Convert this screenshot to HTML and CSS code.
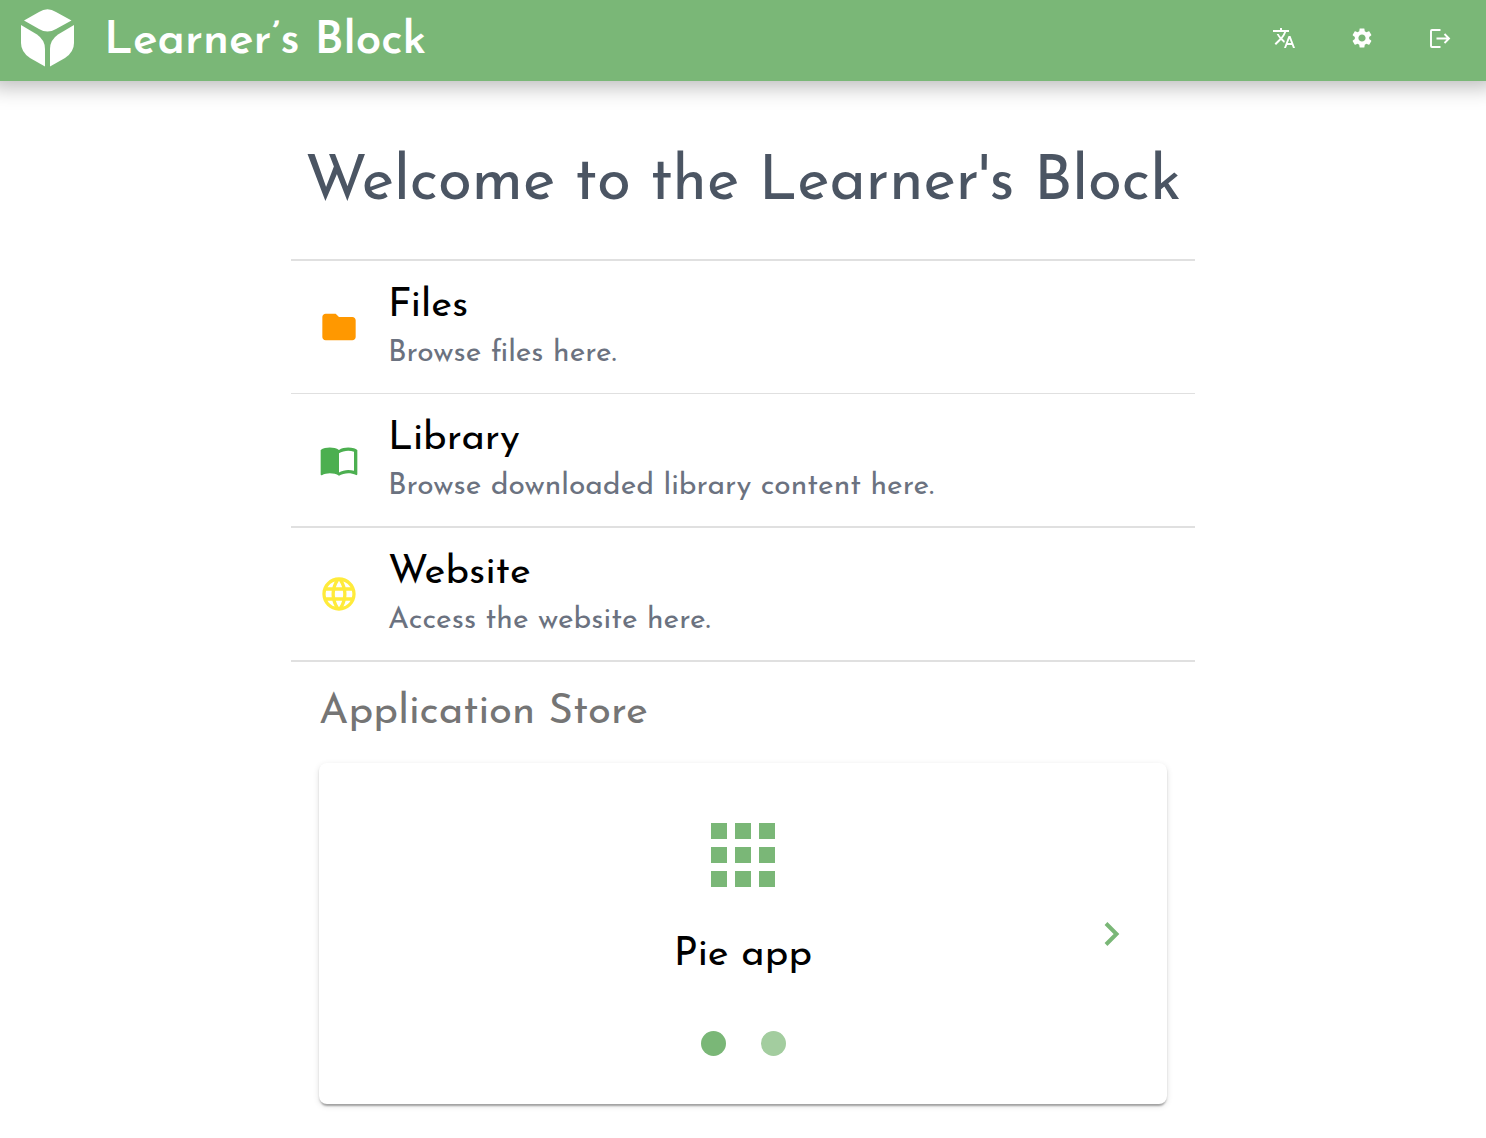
FILE: index.html
```html
<!DOCTYPE html>
<html lang="en">
<head>
<meta charset="utf-8">
<meta name="viewport" content="width=device-width, initial-scale=1">
<title>Learner's Block</title>
<link rel="stylesheet" href="styles.css">
</head>
<body>
<header class="topbar">
  <a class="brand" href="#">
    <svg class="brand-mark" viewBox="0 0 53 58" aria-hidden="true">
      <path d="M3 11.500 18 3Q26.500-2.500 35 3L50.500 11.500 35 20Q26.500 25 18 20Z"/>
      <path d="M0 16 16 25.500Q24 31 24 40V57.500L9 49Q0 43 0 34Z"/>
      <path d="M53 16 37 25.500Q29 31 29 40V57.500L44 49Q53 43 53 34Z"/>
    </svg>
    <span class="brand-name">Learner’s Block</span>
  </a>
  <nav class="tools" aria-label="Tools">
    <button class="tool" type="button" aria-label="Language">
      <svg viewBox="0 0 24 24"><path d="m12.870 15.070-2.540-2.510.030-.030c1.740-1.940 2.980-4.170 3.710-6.530H17V4h-7V2H8v2H1v1.990h11.170C11.500 7.920 10.440 9.750 9 11.350 8.070 10.320 7.300 9.190 6.690 8h-2c.730 1.630 1.730 3.170 2.980 4.560l-5.090 5.020L4 19l5-5 3.110 3.110.760-2.040zM18.500 10h-2L12 22h2l1.120-3h4.750L21 22h2l-4.500-12zm-2.620 7 1.620-4.330L19.120 17h-3.240z"/></svg>
    </button>
    <button class="tool" type="button" aria-label="Settings">
      <svg viewBox="0 0 24 24"><path d="M19.140 12.940c.040-.300.060-.610.060-.940 0-.320-.020-.640-.070-.940l2.030-1.580c.180-.140.230-.410.120-.610l-1.920-3.320c-.120-.220-.370-.290-.590-.220l-2.390.960c-.500-.380-1.030-.700-1.620-.940l-.360-2.540c-.040-.240-.240-.410-.480-.410h-3.840c-.240 0-.430.170-.470.410l-.360 2.540c-.590.240-1.130.570-1.620.940l-2.390-.960c-.220-.080-.470 0-.590.220L2.740 8.870c-.120.210-.080.470.120.610l2.030 1.580c-.050.300-.090.630-.090.940s.020.640.070.940l-2.030 1.580c-.180.140-.230.410-.120.610l1.920 3.320c.120.220.370.290.590.220l2.390-.960c.500.380 1.030.700 1.620.940l.360 2.540c.050.240.240.410.480.410h3.840c.240 0 .440-.170.470-.410l.360-2.540c.590-.240 1.130-.560 1.620-.940l2.390.960c.220.080.470 0 .590-.220l1.920-3.320c.120-.220.070-.470-.120-.610l-2.010-1.580zM12 15.600c-1.980 0-3.600-1.620-3.600-3.600s1.620-3.600 3.600-3.600 3.600 1.620 3.600 3.600-1.620 3.600-3.600 3.600z"/></svg>
    </button>
    <button class="tool" type="button" aria-label="Log out">
      <svg viewBox="0 0 24 24"><path d="M12.500 4H4a1 1 0 0 0-1 1v15a1 1 0 0 0 1 1h8.500M8.500 12.500h12.500M16.500 8l4.500 4.500-4.500 4.500" fill="none" stroke="currentColor" stroke-width="1.900"/></svg>
    </button>
  </nav>
</header>

<main class="page">
  <h1 class="welcome">Welcome to the Learner's Block</h1>
  <ul class="links">
    <li class="links-item">
      <a class="link" href="#files">
        <svg class="link-icon link-icon-files" viewBox="0 0 24 24" aria-hidden="true"><path d="M10 4H4c-1.100 0-1.990.900-1.990 2L2 18c0 1.100.900 2 2 2h16c1.100 0 2-.900 2-2V8c0-1.100-.900-2-2-2h-8l-2-2z"/></svg>
        <span class="link-text"><span class="link-title">Files</span><span class="link-note">Browse files here.</span></span>
      </a>
    </li>
    <li class="links-item">
      <a class="link" href="#library">
        <svg class="link-icon link-icon-library" viewBox="0 0 24 24" aria-hidden="true"><path d="M21 5c-1.110-.350-2.330-.500-3.500-.500-1.950 0-4.050.400-5.500 1.500-1.450-1.100-3.550-1.500-5.500-1.500S2.450 4.900 1 6v14.650c0 .250.250.500.500.500.100 0 .150-.050.250-.050C3.100 20.450 5.050 20 6.500 20c1.950 0 4.050.400 5.500 1.500 1.350-.850 3.800-1.500 5.500-1.500 1.650 0 3.350.300 4.750 1.050.100.050.150.050.250.050.250 0 .500-.250.500-.500V6c-.600-.450-1.250-.750-2-1zm0 13.500c-1.100-.350-2.300-.500-3.500-.500-1.700 0-4.150.650-5.500 1.500V8c1.350-.850 3.800-1.500 5.500-1.500 1.200 0 2.400.150 3.500.500v11.500z"/></svg>
        <span class="link-text"><span class="link-title">Library</span><span class="link-note">Browse downloaded library content here.</span></span>
      </a>
    </li>
    <li class="links-item">
      <a class="link" href="#website">
        <svg class="link-icon link-icon-website" viewBox="0 0 24 24" aria-hidden="true"><path d="M11.990 2C6.470 2 2 6.480 2 12s4.470 10 9.990 10C17.520 22 22 17.520 22 12S17.520 2 11.990 2zm6.930 6h-2.950c-.320-1.250-.780-2.450-1.380-3.560 1.840.630 3.370 1.910 4.330 3.560zM12 4.040c.830 1.200 1.480 2.530 1.910 3.960h-3.820c.430-1.430 1.080-2.760 1.910-3.960zM4.260 14C4.100 13.360 4 12.690 4 12s.100-1.360.260-2h3.380c-.080.660-.140 1.320-.140 2s.060 1.340.140 2H4.260zm.820 2h2.950c.320 1.250.780 2.450 1.380 3.560-1.840-.630-3.370-1.900-4.330-3.560zm2.950-8H5.080c.960-1.660 2.490-2.930 4.330-3.560C8.810 5.550 8.350 6.750 8.030 8zM12 19.960c-.830-1.200-1.480-2.530-1.910-3.960h3.820c-.430 1.430-1.080 2.760-1.910 3.960zM14.340 14H9.660c-.090-.660-.160-1.320-.160-2s.070-1.350.160-2h4.680c.090.650.160 1.320.160 2s-.070 1.340-.160 2zm.250 5.560c.600-1.110 1.060-2.310 1.380-3.560h2.950c-.960 1.650-2.490 2.930-4.330 3.560zM16.360 14c.080-.660.140-1.320.140-2s-.060-1.340-.140-2h3.380c.160.640.260 1.310.260 2s-.100 1.360-.260 2h-3.380z"/></svg>
        <span class="link-text"><span class="link-title">Website</span><span class="link-note">Access the website here.</span></span>
      </a>
    </li>
  </ul>

  <section class="store" aria-labelledby="store-title">
    <h2 class="store-title" id="store-title">Application Store</h2>
    <div class="card">
      <div class="slide">
        <svg class="slide-icon" viewBox="0 0 64 64" aria-hidden="true"><path d="M0 0h16v16H0zM24 0h16v16H24zM48 0h16v16H48zM0 24h16v16H0zM24 24h16v16H24zM48 24h16v16H48zM0 48h16v16H0zM24 48h16v16H24zM48 48h16v16H48z"/></svg>
        <span class="slide-name">Pie app</span>
      </div>
      <div class="dots">
        <button class="dot dot-active" type="button" aria-label="Slide 1"></button>
        <button class="dot" type="button" aria-label="Slide 2"></button>
      </div>
      <button class="next" type="button" aria-label="Next app">
        <svg viewBox="0 0 40 40"><path d="m15 9.500 10.500 10.500L15 30.500" fill="none" stroke="currentColor" stroke-width="4"/></svg>
      </button>
    </div>
  </section>
</main>
</body>
</html>
```

FILE: styles.css
```css
* {
  box-sizing: border-box;
}

body {
  margin: 0;
  background: #fff;
  color: #000;
  font-family: "Josefin Sans", Lato, sans-serif;
}

svg {
  display: block;
  fill: currentColor;
}

button {
  padding: 0;
  border: 0;
  background: none;
  color: inherit;
  cursor: pointer;
}

a {
  color: inherit;
  text-decoration: none;
}

.topbar {
  display: flex;
  align-items: center;
  justify-content: space-between;
  padding: 8px 34px 13px 21px;
  background: #7ab777;
  color: #fff;
  box-shadow: 0 -4px 20px 10px rgba(0, 0, 0, 0.27);
}

.brand {
  display: flex;
  align-items: center;
  gap: 30px;
}

.brand-mark {
  width: 53px;
  height: 58px;
}

.brand-name {
  padding-top: 8px;
  font-size: 46px;
  font-weight: 600;
  line-height: 52px;
}

.tools {
  display: flex;
  gap: 54px;
}

.tool {
  width: 24px;
  height: 24px;
}

.page {
  max-width: 904px;
  margin: 0 auto;
  padding-bottom: 32px;
}

.welcome {
  margin: 0;
  padding: 63px 0 35px;
  color: #4b5563;
  font-size: 62px;
  font-weight: 400;
  line-height: 80px;
  text-align: center;
}

.links {
  margin: 0;
  padding: 0;
  border-top: 2px solid #e0e0e0;
  list-style: none;
}

.links-item {
  border-bottom: 2px solid #e0e0e0;
}

.links-item:first-child {
  border-bottom-width: 1px;
}

.link {
  display: flex;
  align-items: center;
  gap: 29px;
  padding: 0 28px;
}

.link-icon {
  flex: none;
  width: 40px;
  height: 40px;
}

.link-icon-files {
  color: #ff9800;
}

.link-icon-library {
  color: #4caf50;
}

.link-icon-website {
  color: #ffeb3b;
}

.link-text {
  display: flex;
  flex-direction: column;
  padding: 21px 0 15px;
}

.link-title {
  font-size: 40px;
  line-height: 48px;
}

.link-note {
  color: #6b7280;
  font-size: 30px;
  line-height: 48px;
}

.store {
  padding: 21px 28px 0;
}

.store-title {
  margin: 0 0 20px;
  color: #757575;
  font-size: 42px;
  font-weight: 400;
  line-height: 60px;
}

.card {
  display: grid;
  grid-template-columns: 40px 1fr 40px;
  align-items: center;
  row-gap: 50px;
  padding: 48px 36px;
  border-radius: 8px;
  background: #fff;
  box-shadow: 0 4px 2px -2px rgba(0, 0, 0, 0.2), 0 2px 2px rgba(0, 0, 0, 0.14), 0 2px 6px rgba(0, 0, 0, 0.12);
}

.slide {
  display: flex;
  grid-row: 1;
  grid-column: 2;
  flex-direction: column;
  align-items: center;
  gap: 42px;
  padding-top: 12px;
}

.slide-icon {
  width: 64px;
  height: 64px;
  color: #7ab777;
}

.slide-name {
  font-size: 40px;
  line-height: 52px;
}

.next {
  grid-row: 1 / 3;
  grid-column: 3;
  width: 40px;
  height: 40px;
  color: #7ab777;
}

.dots {
  display: flex;
  grid-row: 2;
  grid-column: 2;
  justify-content: center;
  gap: 35px;
}

.dot {
  width: 25px;
  height: 25px;
  border-radius: 50%;
  background: #a3cd9f;
}

.dot-active {
  background: #7ab777;
}
```
